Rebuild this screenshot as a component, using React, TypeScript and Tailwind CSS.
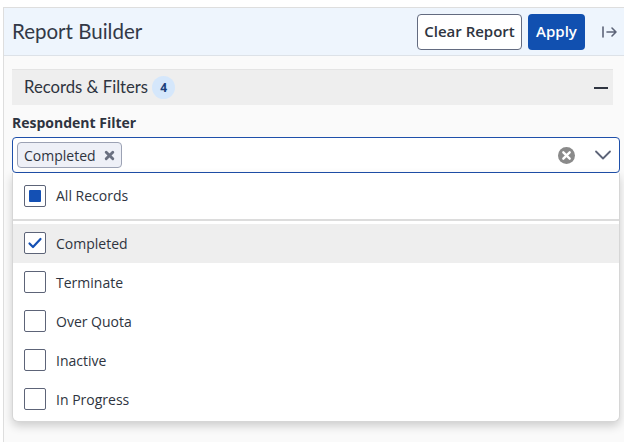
import React from "react";

const sans = { fontFamily: '"Open Sans", "Liberation Sans", sans-serif' };
const lato = { fontFamily: 'Lato, "Open Sans", sans-serif' };

function Box({ state }: { state: "none" | "check" | "partial" }) {
  return (
    <div className="w-[22px] h-[22px] border border-[#5d6478] rounded-[2px] bg-white flex items-center justify-center shrink-0">
      {state === "partial" && <div className="w-[12px] h-[12px] bg-[#1450b4] rounded-[1px]" />}
      {state === "check" && (
        <svg width="16" height="16" viewBox="0 0 16 16">
          <path d="M2.5 8.5 L6 12 L13.5 4" fill="none" stroke="#1450b4" strokeWidth="2.2" strokeLinecap="round" strokeLinejoin="round" />
        </svg>
      )}
    </div>
  );
}

function Row({ label, state, active }: { label: string; state: "none" | "check" | "partial"; active?: boolean }) {
  return (
    <div className={`h-[39px] flex items-center pl-[11px] gap-[10px] ${active ? "bg-[#eeeeee]" : ""}`}>
      <Box state={state} />
      <span className="text-[14px] text-[#2e3440]">{label}</span>
    </div>
  );
}

export default function App() {
  return (
    <div className="w-[624px] h-[442px] bg-white pt-[7px] pl-[3px] overflow-hidden" style={sans}>
      <div className="h-full border-t border-l border-[#dedede] bg-[#fafafa] flex flex-col">
        <div className="h-[48px] bg-[#eef5fd] border-b border-[#dde2e8] flex items-center pl-[8px] pr-[5px]">
          <div className="text-[20.5px] text-[#333947] flex-1" style={lato}>Report Builder</div>
          <button className="h-[36px] w-[105px] border border-[#636b80] rounded-[4px] bg-white text-[15px] font-semibold text-[#2e3440]">
            Clear Report
          </button>
          <button className="ml-[6px] h-[36px] w-[57px] rounded-[4px] bg-[#1150b0] text-white text-[15px] font-semibold">
            Apply
          </button>
          <svg className="ml-[16px]" width="18" height="16" viewBox="0 0 18 16">
            <path d="M2 3 V13" stroke="#5d6478" strokeWidth="1.6" strokeLinecap="round" />
            <path d="M6 8 H15 M11 4 L15 8 L11 12" stroke="#5d6478" strokeWidth="1.6" fill="none" strokeLinecap="round" strokeLinejoin="round" />
          </svg>
        </div>
        <div className="flex-1 pl-[8px] pr-[4px] pt-[13px]">
          <div className="h-[36px] mr-[7px] bg-[#eeeeee] border-t border-[#e4e4e4] flex items-center pl-[12px] pr-[5px]">
            <span className="text-[16.7px] text-[#2e3440]" style={lato}>Records &amp; Filters</span>
            <span className="ml-[4px] w-[23px] h-[23px] rounded-full bg-[#d5e7fb] text-[#1b3f7a] text-[12px] font-bold flex items-center justify-center">4</span>
            <div className="flex-1" />
            <div className="w-[14px] h-[2px] bg-[#2e3440]" />
          </div>
          <div className="mt-[8px] text-[14px] font-bold text-[#2e3440] leading-[20px]">Respondent Filter</div>
          <div className="relative mt-[4px]">
            <div className="h-[36px] border border-[#1f50aa] rounded-[4px] bg-white flex items-center pl-[4px] pr-[7px]">
              <div className="h-[26px] pl-[6px] pr-[6px] border border-[#9ca2b4] bg-[#eef0f7] rounded-[4px] flex items-center gap-[8px]">
                <span className="text-[14px] text-[#2e3440]">Completed</span>
                <svg width="11" height="11" viewBox="0 0 10 10">
                  <path d="M2 2 L8 8 M8 2 L2 8" stroke="#6a7080" strokeWidth="2.6" strokeLinecap="round" />
                </svg>
              </div>
              <div className="flex-1" />
              <svg width="17" height="17" viewBox="0 0 16 16">
                <circle cx="8" cy="8" r="8" fill="#8a8a8a" />
                <path d="M5 5 L11 11 M11 5 L5 11" stroke="white" strokeWidth="2.2" strokeLinecap="round" />
              </svg>
              <svg className="ml-[19px]" width="18" height="10" viewBox="0 0 18 10">
                <path d="M2 1.5 L9 8.5 L16 1.5" stroke="#5d6478" strokeWidth="1.8" fill="none" strokeLinecap="round" strokeLinejoin="round" />
              </svg>
            </div>
            <div className="absolute left-0 right-0 top-[36px] bg-white rounded-b-[6px] border-r border-l border-b border-[#d6d6d6] shadow-[0_4px_10px_rgba(0,0,0,0.18)] pt-[3px] pb-[2px]">
              <Row label="All Records" state="partial" />
              <div className="mt-[4px] mb-[3px] h-[1.5px] bg-[#dcdcdc]" />
              <Row label="Completed" state="check" active />
              <Row label="Terminate" state="none" />
              <Row label="Over Quota" state="none" />
              <Row label="Inactive" state="none" />
              <Row label="In Progress" state="none" />
            </div>
          </div>
        </div>
      </div>
    </div>
  );
}
